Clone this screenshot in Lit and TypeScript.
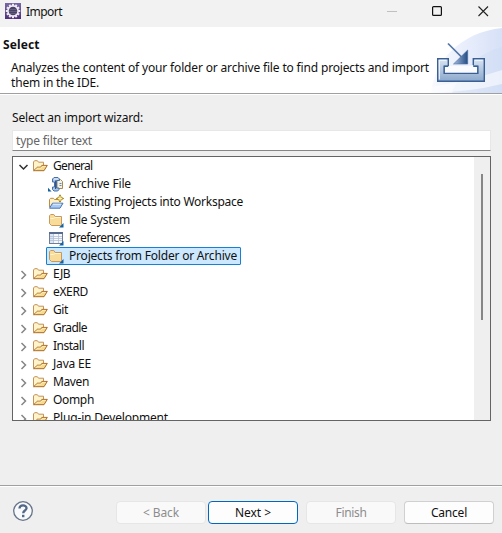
import { LitElement, html, svg, css } from "lit";
import { customElement, property, state } from "lit/decorators.js";
import { classMap } from "lit/directives/class-map.js";
import { styleMap } from "lit/directives/style-map.js";

type IconName = "open" | "archive" | "existing" | "folder" | "prefs";
interface Item { label: string; icon: IconName; w: number; children?: Item[]; expanded?: boolean; selected?: boolean }

const TREE: Item[] = [
  { label: "General", icon: "open", w: 39.5, expanded: true, children: [
    { label: "Archive File", icon: "archive", w: 62 },
    { label: "Existing Projects into Workspace", icon: "existing", w: 174 },
    { label: "File System", icon: "folder", w: 61 },
    { label: "Preferences", icon: "prefs", w: 61 },
    { label: "Projects from Folder or Archive", icon: "folder", w: 168, selected: true },
  ] },
  { label: "EJB", icon: "open", w: 17 },
  { label: "eXERD", icon: "open", w: 35 },
  { label: "Git", icon: "open", w: 15 },
  { label: "Gradle", icon: "open", w: 34 },
  { label: "Install", icon: "open", w: 31 },
  { label: "Java EE", icon: "open", w: 38 },
  { label: "Maven", icon: "open", w: 36 },
  { label: "Oomph", icon: "open", w: 41 },
  { label: "Plug-in Development", icon: "open", w: 115 },
];

const shortcut = svg`<path d="M15.5 11V15.5H11Z" fill="#1361a0"/>`;

const ICONS = {
  open: svg`
    <path d="M1.5 12.5V4L2.6 2.7H5.4L6.5 4.2H11.5V7" fill="#fff3c9" stroke="#c4925a"/>
    <path d="M1.6 12.7L5.5 9.2H8.6L9.8 7.4H15.3L12 12.7Z" fill="#f8d98c" stroke="#a96a25"/>
    <path d="M3.4 11.8L6 10.1H9.2L10.4 8.4H13.7" fill="none" stroke="#fff0c0" stroke-width=".8"/>`,
  archive: svg`
    <path d="M9 3.5H12.5L14.5 5.5V12.5H9Z" fill="#f5f1df" stroke="#a78b51"/>
    <path d="M11.5 7.5H13.5M11.5 9.5H13.5" fill="none" stroke="#6a88b7"/>
    <path d="M4.5 6V3L6 1.5H10L11.5 3V4.5H8.5V12H11V13.5L9.7 15H6L4.5 13.5V11H6.5V6Z" fill="#a9c5e9" stroke="#456ea5"/>
    <path d="M6 3H10" stroke="#eaf3ff"/>
    <path d="M7.5 4.5V13" stroke="#31588e"/>
    <path d="M0 11.8L3.6 15.4H0Z" fill="#1361a0"/>`,
  existing: svg`
    <path d="M1.5 13V5.5L2.6 4.3H5.4L6.5 5.5H12V8" fill="#fff0c4" stroke="#c18a42"/>
    <path d="M1.5 14.2L4.5 9.2H15L12 14.2Z" fill="#a9caf5" stroke="#4875b5"/>
    <path d="M5 10.2H13.2" stroke="#e6f1ff"/>
    <path d="M12 .8L13.2 3.3L15.7 4.5L13.2 5.7L12 8.2L10.8 5.7L8.3 4.5L10.8 3.3Z" fill="#a98522" stroke="#a98522"/>
    <path d="M12 2.3V6.7M9.8 4.5H14.2" stroke="#fff1aa" stroke-width="1.3"/>`,
  folder: svg`
    <path d="M1.5 11.5V3.7L2.7 2.5H5.8L7.2 4.5H13.5V12.5L12.5 13.5H3.5Z" fill="#f8dc9a" stroke="#c8985d"/>
    <path d="M2.4 6.5H5.6L7 5.5H12.7" fill="none" stroke="#fff4d4"/>${shortcut}`,
  prefs: svg`
    <rect x="1.5" y="2.5" width="13" height="11" fill="#f5f9ff" stroke="#6f7e94"/>
    <path d="M1 3H15" stroke="#566b8e" stroke-width="2"/>
    <path d="M2 4H6V13H2Z" fill="#dbe6f4"/>
    <path d="M5.5 4V13M10.5 4V13M2 6.5H14M2 8.5H14M2 10.5H14" stroke="#b3c0d4" stroke-width=".8"/>${shortcut}`,
};

/** Text whose tracking is adjusted so that it takes a given advance width. */
@customElement("ui-text")
class UiText extends LitElement {
  @property() text = "";
  @property({ type: Number }) w = 0;
  @state() private tracking = 0;
  static styles = css`
    :host { display: inline-block; white-space: pre; }
    .t { display: inline-block; }
  `;
  firstUpdated() {
    const el = this.renderRoot.querySelector(".t") as HTMLElement;
    const natural = el.getBoundingClientRect().width;
    if (this.w && natural) this.tracking = (this.w - natural) / this.text.length;
  }
  render() {
    return html`<span class="t" style=${styleMap({ letterSpacing: `${this.tracking}px` })}>${this.text}</span>`;
  }
}

@customElement("wizard-tree")
class WizardTree extends LitElement {
  static styles = css`
    :host { display: flex; box-sizing: border-box; height: 265px; border: 1px solid #646464; background: #fff; overflow: hidden; }
    .rows { flex: 1; min-width: 0; overflow: hidden; }
    .row { display: flex; align-items: center; height: 18px; padding-left: 4px; }
    .child { padding-left: 33px; }
    .chev { width: 12px; height: 12px; margin-right: 1px; flex: none; }
    .chev path { fill: none; stroke: #858585; stroke-width: 1.5; }
    .chev.down path { stroke: #303030; }
    .icon { width: 16px; height: 16px; flex: none; }
    .cell { display: flex; align-items: center; height: 18px; box-sizing: border-box; border: 1px solid transparent; padding: 0 3px 0 1px; border-radius: 1px; }
    .cell ui-text { margin-left: 5px; line-height: 16px; }
    .selected { background: #cce8ff; border-color: #1580d4; }
    .track { width: 16px; background: #efefef; flex: none; padding: 17px 0 0 7px; box-sizing: border-box; }
    .thumb { width: 2px; height: 146px; background: #868686; }
  `;
  row(i: Item, child = false): unknown {
    return html`
      <div class=${classMap({ row: true, child })}>
        ${child ? "" : html`<svg class=${classMap({ chev: true, down: !!i.expanded })} viewBox="0 0 12 12">
          <path d=${i.expanded ? "M2.5 5L6.5 9L10.5 5" : "M4.5 3L8.5 7L4.5 11"}></path></svg>`}
        <div class=${classMap({ cell: true, selected: !!i.selected })}>
          <svg class="icon" viewBox="0 0 16 16">${ICONS[i.icon]}</svg>
          <ui-text .text=${i.label} .w=${i.w}></ui-text>
        </div>
      </div>
      ${i.children?.map((c) => this.row(c, true))}`;
  }
  render() {
    return html`<div class="rows">${TREE.map((i) => this.row(i))}</div>
      <div class="track"><div class="thumb"></div></div>`;
  }
}

@customElement("app-root")
class AppRoot extends LitElement {
  static styles = css`
    :host { display: flex; flex-direction: column; width: 502px; height: 533px; box-sizing: border-box; overflow: hidden;
      background: #efefef; color: #111; font: 12px/15px "Noto Sans", "Open Sans", sans-serif; }
    .title { display: flex; align-items: center; height: 27px; background: #f2f2f2; flex: none; padding: 0 13px 4px 5px; box-sizing: border-box; }
    .logo { width: 16px; height: 16px; margin-right: 5px; position: relative; top: -1px; }
    .controls { margin-left: auto; width: 103px; height: 12px; position: relative; top: -1px; }
    .head { display: flex; height: 66px; background: #fff; flex: none; border-bottom: 1px solid #a0a0a0; box-shadow: 0 1px #fff; }
    .words { flex: 1; display: flex; flex-direction: column; align-items: flex-start; padding: 10px 0 0 3px; white-space: nowrap; }
    .words b { display: flex; margin-bottom: 8px; }
    .words div { display: flex; padding-left: 8px; }
    .banner { width: 72px; height: 66px; flex: none; }
    .body { display: flex; flex-direction: column; flex: 1; padding: 16px 11px 0 12px; }
    .filter { box-sizing: border-box; height: 21px; margin: 5px 0; background: #fff; border: 1px solid #e7e7e7; border-bottom-color: #868686; padding: 2px 3px; color: #666; }
    .foot { display: flex; height: 48px; flex: none; border-top: 1px solid #a0a0a0; box-shadow: inset 0 1px #fff; padding: 15px 8px 0 12px; box-sizing: border-box; }
    .help { width: 22px; height: 22px; margin: -1px auto 0 0; }
    .btn { box-sizing: border-box; width: 90px; height: 23px; display: flex; align-items: center; justify-content: center; background: #fdfdfd;
      border: 1px solid #d0d0d0; border-bottom-color: #bdbdbd; border-radius: 4px; }
    .off { background: #f9f9f9; border-color: #e6e6e6; color: #8d8d8d; }
    .main { border-color: #0067c0; margin: 0 8px 0 2px; }
    .last { margin-left: 8px; }
  `;
  t(text: string, w: number) { return html`<ui-text .text=${text} .w=${w}></ui-text>`; }
  render() {
    const teeth = Array.from({ length: 12 }, (_, i) => i * 30);
    return html`
      <div class="title">
        <svg class="logo" viewBox="0 0 16 16">
          <defs><linearGradient id="lg" x2="0" y2="1"><stop stop-color="#7868a4"/><stop offset="1" stop-color="#4f3079"/></linearGradient></defs>
          <rect width="16" height="16" fill="url(#lg)"/>
          ${teeth.map((a) => svg`<rect x="7" y=".8" width="2" height="2.6" fill="#eeebf2" transform="rotate(${a} 8 8)"/>`)}
          <circle cx="8" cy="8" r="5.1" fill="#4a4265" stroke="#eeebf2" stroke-width="1.6"/>
          <path d="M4.3 6.5H11.7M4 8.5H12M4.5 10.5H11.5" stroke="#6f6889" stroke-width=".7"/>
        </svg>
        ${this.t("Import", 36)}
        <svg class="controls" viewBox="0 0 103 12" fill="none">
          <path d="M1 6.5H11" stroke="#c0c0c0"/>
          <rect x="46.6" y="1.6" width="8.8" height="8.8" rx="1" stroke="#111" stroke-width="1.2"/>
          <path d="M92.5 1.5L102 11M102 1.5L92.5 11" stroke="#222" stroke-width="1.1"/>
        </svg>
      </div>
      <div class="head">
        <div class="words">
          <b>${this.t("Select", 36.5)}</b>
          <div>${this.t("Analyzes the content of your folder or archive file to find projects and import", 418)}</div>
          <div>${this.t("them in the IDE.", 88)}</div>
        </div>
        <svg class="banner" viewBox="0 0 72 66">
          <defs>
            <linearGradient id="sw" x1="0" x2="1"><stop stop-color="#f8faff"/><stop offset="1" stop-color="#d7e1f7"/></linearGradient>
            <linearGradient id="tr" x2="0" y2="1"><stop stop-color="#dae5f3"/><stop offset="1" stop-color="#8ba8cc"/></linearGradient>
            <linearGradient id="ar"><stop stop-color="#a7bfdf"/><stop offset="1" stop-color="#234b84"/></linearGradient>
          </defs>
          <path d="M1 66C4 34 31 5 72 1V66Z" fill="url(#sw)"/>
          <path d="M22 66C30 45 48 26 72 20V66Z" fill="#ccd9f4" opacity=".35"/>
          <path d="M1 60Q42 53 72 43V57Q40 65 1 66Z" fill="#fff" opacity=".55"/>
          <path d="M7.7 31.7H18.3V39.3H14.3V46.3H47.7V39.3H43.3V31.7H54.3V54.3H7.7Z" fill="url(#tr)" stroke="#3a5f95" stroke-width="1.4"/>
          <path d="M14.3 39.3V46.3H47.7V39.3H43.3V38L37 39H18.3Z" fill="#f9fbff"/>
          <path d="M18.3 39.3H14.3V46.3H47.7V39.3H43.3" fill="none" stroke="#3a5f95" stroke-width="1.2"/>
          <path d="M9.3 33.3H16.5M9.3 33V52.5M45 33.3H52.7" stroke="#f4f8ff" stroke-width="1" fill="none"/>
          <path d="M18 16.5L33 31.5" stroke="#5375a7" stroke-width="1.7"/>
          <path d="M37.7 23V37H23.5Z" fill="url(#ar)" stroke="#4b6fa5" stroke-width=".6"/>
        </svg>
      </div>
      <div class="body">
        <div>${this.t("Select an import wizard:", 131)}</div>
        <div class="filter">${this.t("type filter text", 76)}</div>
        <wizard-tree></wizard-tree>
      </div>
      <div class="foot">
        <svg class="help" viewBox="0 0 22 22" fill="none">
          <circle cx="11" cy="11" r="9.3" fill="#f7f9fb" stroke="#66748a" stroke-width="1.3"/>
          <path d="M7.5 8.6C7.5 4.4 14.6 4.5 14.5 8.2C14.4 10.5 11.2 10.6 11.2 13.2" stroke="#536888" stroke-width="2.3"/>
          <rect x="10" y="14.8" width="2.4" height="2.4" fill="#536888"/>
        </svg>
        <div class="btn off">${this.t("< Back", 36)}</div>
        <div class="btn main">${this.t("Next >", 36)}</div>
        <div class="btn off">${this.t("Finish", 31)}</div>
        <div class="btn last">${this.t("Cancel", 36)}</div>
      </div>`;
  }
}
